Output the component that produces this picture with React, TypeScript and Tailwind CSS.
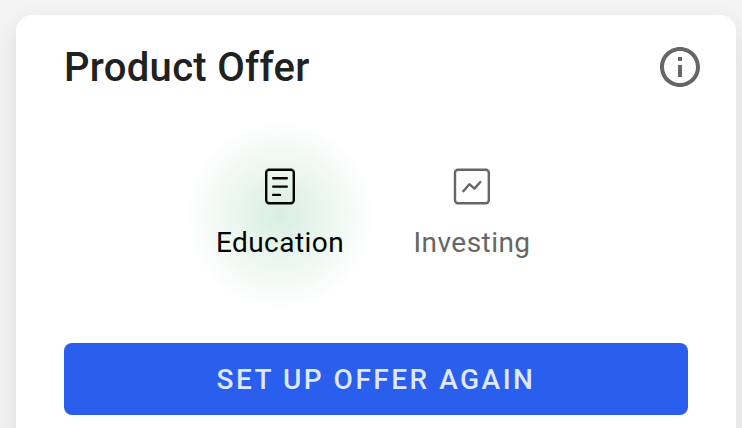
import React from 'react';

interface OfferTabProps {
  label: string;
  active?: boolean;
  children: React.ReactNode;
}

function OfferTab({ label, active = false, children }: OfferTabProps) {
  return (
    <button
      className={`flex h-[192px] w-[192px] flex-col items-center pt-[44px] ${
        active
          ? 'bg-[radial-gradient(circle_closest-side_at_50%_50.5%,#d8eee1,#ffffff)] text-black'
          : 'text-[#666666]'
      }`}
    >
      {children}
      <span className="mt-[13px] text-[28px] leading-10 tracking-[0.45px]">{label}</span>
    </button>
  );
}

function EducationIcon() {
  return (
    <svg width="48" height="48" viewBox="0 0 48 48" fill="none" stroke="currentColor" strokeLinecap="round">
      <rect x="10.2" y="7.7" width="27.6" height="33.6" rx="3" strokeWidth="2.4" />
      <path d="M17.2 16.2h13.6M17.2 24.6h13.6M17.2 32.9h6.8" strokeWidth="2.4" />
    </svg>
  );
}

function InvestingIcon() {
  return (
    <svg
      width="48"
      height="48"
      viewBox="0 0 48 48"
      fill="none"
      stroke="currentColor"
      strokeLinecap="round"
      strokeLinejoin="round"
    >
      <rect x="7" y="7.7" width="33.8" height="33.6" rx="3" strokeWidth="2.4" />
      <path d="M15.3 29.2l6-7 5.2 4.4 5.8-6.6" strokeWidth="2.4" />
    </svg>
  );
}

function InfoIcon() {
  return (
    <svg width="48" height="48" viewBox="0 0 24 24" fill="currentColor">
      <path d="M11 7h2v2h-2zm0 4h2v6h-2zm1-9C6.48 2 2 6.48 2 12s4.48 10 10 10 10-4.48 10-10S17.52 2 12 2zm0 18c-4.41 0-8-3.59-8-8s3.59-8 8-8 8 3.59 8 8-3.59 8-8 8z" />
    </svg>
  );
}

export default function App() {
  return (
    <div className="h-[428px] w-[742px] overflow-hidden bg-[#f4f4f4] pl-4 pt-[15px] font-['Roboto',sans-serif]">
      <div className="h-[460px] w-[720px] rounded-2xl bg-white pl-12 pr-8 pt-7 shadow-[0_8px_28px_rgba(0,0,0,0.10)]">
        <div className="flex h-12 items-center justify-between">
          <h1 className="pt-0.5 text-[40px] font-medium leading-12 tracking-[0.3px] text-[#212121]">Product Offer</h1>
          <button aria-label="Info" className="text-[#666666]">
            <InfoIcon />
          </button>
        </div>
        <div className="mr-4 mt-[27px] flex justify-center">
          <OfferTab label="Education" active>
            <EducationIcon />
          </OfferTab>
          <OfferTab label="Investing">
            <InvestingIcon />
          </OfferTab>
        </div>
        <button className="mt-[33px] block h-[72px] w-[624px] rounded-lg bg-[#2a5eed] pt-0.5 text-[28px] font-medium uppercase tracking-[2.5px] text-[#dfe7fc]">
          Set up offer again
        </button>
      </div>
    </div>
  );
}
